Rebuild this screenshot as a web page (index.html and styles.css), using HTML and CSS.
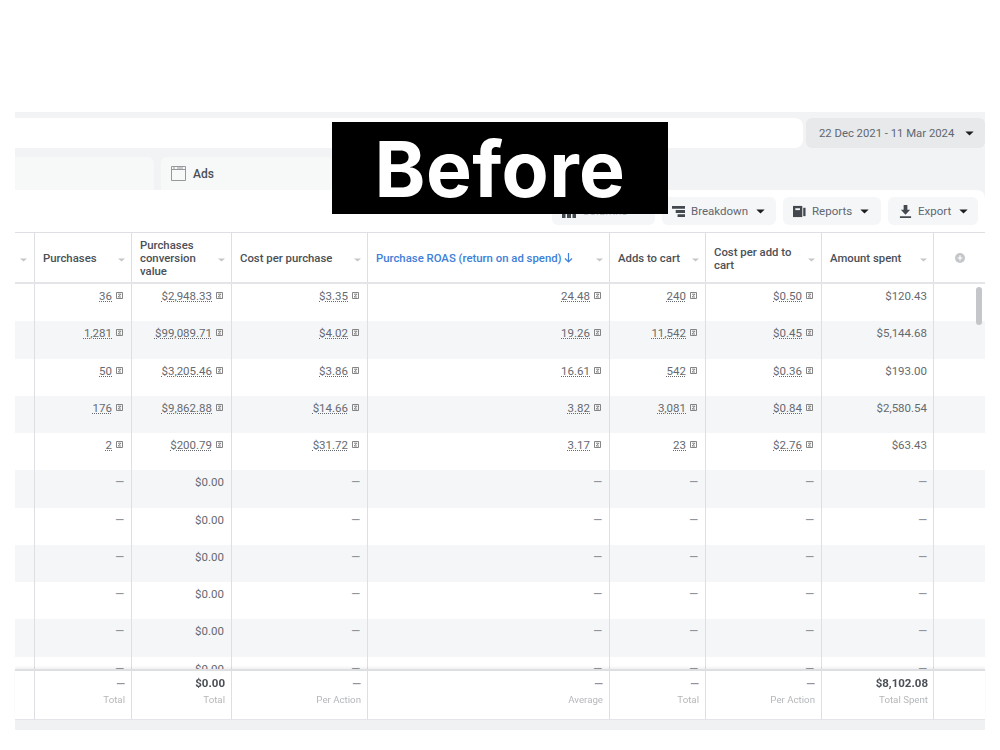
FILE: index.html
```html
<!DOCTYPE html>
<html lang="en">
<head>
<meta charset="utf-8">
<title>Ads report</title>
<link rel="stylesheet" href="styles.css">
</head>
<body>
<svg class="defs" width="0" height="0" aria-hidden="true">
  <symbol id="cmp" viewBox="0 0 7 7"><path d="M.5.5h6v6h-6z" fill="none" stroke="#777" stroke-width=".9"/><path d="M2 2.2h3L2.2 5H5" fill="none" stroke="#777" stroke-width=".9"/></symbol>
  <symbol id="sort" viewBox="0 0 9 5"><path d="M0 .5h9L4.500 4.500z" fill="#c4c6c9"/></symbol>
  <symbol id="caret" viewBox="0 0 10 6"><path d="M0 .5h10L5 5.500z" fill="#1c1e21"/></symbol>
</svg>
<main class="app">
  <div class="topstrip"></div>
  <div class="searchrow">
    <div class="search"></div>
    <div class="date"><span>22 Dec 2021 - 11 Mar 2024</span><svg class="caret"><use href="#caret"/></svg></div>
  </div>
  <div class="tabs">
    <div class="tab tab-first"></div>
    <div class="tab tab-ads">
      <svg class="ads-icon" viewBox="0 0 15 15"><path d="M.5.5h14v14H.5zM.5 3.500h14M2 2h2M6 2h6" fill="none" stroke="#8a8d91" stroke-width=".9"/></svg>
      <span>Ads</span>
    </div>
  </div>
  <div class="toolbar">
    <div class="btn btn-columns"><svg class="col-icon" viewBox="0 0 14 14"><path d="M0 0h3.500v14H0zM5 0h4v14H5zM10.500 0H14v14h-3.500z" fill="#444950"/></svg><span>Columns</span></div>
    <div class="btn btn-breakdown"><svg class="tool-icon" viewBox="0 0 14 14"><path d="M0 1h14v3H0zM4 5.500h10v3H4zM6 10h8v3H6z" fill="#444950"/></svg><span>Breakdown</span><svg class="caret"><use href="#caret"/></svg></div>
    <div class="btn btn-reports"><svg class="tool-icon" viewBox="0 0 14 14"><path d="M0 1h10v12H0z" fill="#444950"/><path d="M2.500 3.500h5v2h-5z" fill="#f5f6f7"/><path d="M11 3h2.500v9H11z" fill="#444950"/></svg><span>Reports</span><svg class="caret"><use href="#caret"/></svg></div>
    <div class="btn btn-export"><svg class="tool-icon" viewBox="0 0 14 14"><path d="M5 0h4v5h3L7 10.500 2 5h3zM1 12h12v2H1z" fill="#444950"/></svg><span>Export</span><svg class="caret"><use href="#caret"/></svg></div>
  </div>

  <div class="table">
    <div class="head grid">
      <div class="hc"><svg class="sort"><use href="#sort"/></svg></div>
      <div class="hc"><span>Purchases</span><svg class="sort"><use href="#sort"/></svg></div>
      <div class="hc"><span>Purchases conversion value</span><svg class="sort"><use href="#sort"/></svg></div>
      <div class="hc"><span>Cost per purchase</span><svg class="sort"><use href="#sort"/></svg></div>
      <div class="hc hc-active"><span>Purchase ROAS (return on ad spend)<svg class="arrow" viewBox="0 0 9 10"><path d="M4.500 0v9M1 5.500l3.500 3.500L8 5.500" fill="none" stroke="#4080d8" stroke-width="1.200"/></svg></span><svg class="sort"><use href="#sort"/></svg></div>
      <div class="hc"><span>Adds to cart</span><svg class="sort"><use href="#sort"/></svg></div>
      <div class="hc"><span>Cost per add to cart</span><svg class="sort"><use href="#sort"/></svg></div>
      <div class="hc"><span>Amount spent</span><svg class="sort"><use href="#sort"/></svg></div>
      <div class="hc hc-add"><svg class="plus" viewBox="0 0 10 10"><circle cx="5" cy="5" r="5" fill="#c4c6c9"/><path d="M5 2.500v5M2.500 5h5" stroke="#fff" stroke-width="1.200"/></svg></div>
    </div>

    <div class="rows">
      <div class="row grid">
        <div class="c"></div>
        <div class="c"><u>36</u><svg class="cmp"><use href="#cmp"/></svg></div>
        <div class="c"><u>$2,948.33</u><svg class="cmp"><use href="#cmp"/></svg></div>
        <div class="c"><u>$3.35</u><svg class="cmp"><use href="#cmp"/></svg></div>
        <div class="c"><u>24.48</u><svg class="cmp"><use href="#cmp"/></svg></div>
        <div class="c"><u>240</u><svg class="cmp"><use href="#cmp"/></svg></div>
        <div class="c"><u>$0.50</u><svg class="cmp"><use href="#cmp"/></svg></div>
        <div class="c">$120.43</div>
        <div class="c"></div>
      </div>
      <div class="row grid">
        <div class="c"></div>
        <div class="c"><u>1,281</u><svg class="cmp"><use href="#cmp"/></svg></div>
        <div class="c"><u>$99,089.71</u><svg class="cmp"><use href="#cmp"/></svg></div>
        <div class="c"><u>$4.02</u><svg class="cmp"><use href="#cmp"/></svg></div>
        <div class="c"><u>19.26</u><svg class="cmp"><use href="#cmp"/></svg></div>
        <div class="c"><u>11,542</u><svg class="cmp"><use href="#cmp"/></svg></div>
        <div class="c"><u>$0.45</u><svg class="cmp"><use href="#cmp"/></svg></div>
        <div class="c">$5,144.68</div>
        <div class="c"></div>
      </div>
      <div class="row grid">
        <div class="c"></div>
        <div class="c"><u>50</u><svg class="cmp"><use href="#cmp"/></svg></div>
        <div class="c"><u>$3,205.46</u><svg class="cmp"><use href="#cmp"/></svg></div>
        <div class="c"><u>$3.86</u><svg class="cmp"><use href="#cmp"/></svg></div>
        <div class="c"><u>16.61</u><svg class="cmp"><use href="#cmp"/></svg></div>
        <div class="c"><u>542</u><svg class="cmp"><use href="#cmp"/></svg></div>
        <div class="c"><u>$0.36</u><svg class="cmp"><use href="#cmp"/></svg></div>
        <div class="c">$193.00</div>
        <div class="c"></div>
      </div>
      <div class="row grid">
        <div class="c"></div>
        <div class="c"><u>176</u><svg class="cmp"><use href="#cmp"/></svg></div>
        <div class="c"><u>$9,862.88</u><svg class="cmp"><use href="#cmp"/></svg></div>
        <div class="c"><u>$14.66</u><svg class="cmp"><use href="#cmp"/></svg></div>
        <div class="c"><u>3.82</u><svg class="cmp"><use href="#cmp"/></svg></div>
        <div class="c"><u>3,081</u><svg class="cmp"><use href="#cmp"/></svg></div>
        <div class="c"><u>$0.84</u><svg class="cmp"><use href="#cmp"/></svg></div>
        <div class="c">$2,580.54</div>
        <div class="c"></div>
      </div>
      <div class="row grid">
        <div class="c"></div>
        <div class="c"><u>2</u><svg class="cmp"><use href="#cmp"/></svg></div>
        <div class="c"><u>$200.79</u><svg class="cmp"><use href="#cmp"/></svg></div>
        <div class="c"><u>$31.72</u><svg class="cmp"><use href="#cmp"/></svg></div>
        <div class="c"><u>3.17</u><svg class="cmp"><use href="#cmp"/></svg></div>
        <div class="c"><u>23</u><svg class="cmp"><use href="#cmp"/></svg></div>
        <div class="c"><u>$2.76</u><svg class="cmp"><use href="#cmp"/></svg></div>
        <div class="c">$63.43</div>
        <div class="c"></div>
      </div>
      <div class="row grid"><div class="c"></div><div class="c d">—</div><div class="c">$0.00</div><div class="c d">—</div><div class="c d">—</div><div class="c d">—</div><div class="c d">—</div><div class="c d">—</div><div class="c"></div></div>
      <div class="row grid"><div class="c"></div><div class="c d">—</div><div class="c">$0.00</div><div class="c d">—</div><div class="c d">—</div><div class="c d">—</div><div class="c d">—</div><div class="c d">—</div><div class="c"></div></div>
      <div class="row grid"><div class="c"></div><div class="c d">—</div><div class="c">$0.00</div><div class="c d">—</div><div class="c d">—</div><div class="c d">—</div><div class="c d">—</div><div class="c d">—</div><div class="c"></div></div>
      <div class="row grid"><div class="c"></div><div class="c d">—</div><div class="c">$0.00</div><div class="c d">—</div><div class="c d">—</div><div class="c d">—</div><div class="c d">—</div><div class="c d">—</div><div class="c"></div></div>
      <div class="row grid"><div class="c"></div><div class="c d">—</div><div class="c">$0.00</div><div class="c d">—</div><div class="c d">—</div><div class="c d">—</div><div class="c d">—</div><div class="c d">—</div><div class="c"></div></div>
      <div class="row grid"><div class="c"></div><div class="c d">—</div><div class="c">$0.00</div><div class="c d">—</div><div class="c d">—</div><div class="c d">—</div><div class="c d">—</div><div class="c d">—</div><div class="c"></div></div>
      <div class="scrollbar"></div>
    </div>

    <div class="foot grid">
      <div class="f"></div>
      <div class="f"><b class="d">—</b><small>Total</small></div>
      <div class="f"><b>$0.00</b><small>Total</small></div>
      <div class="f"><b class="d">—</b><small>Per Action</small></div>
      <div class="f"><b class="d">—</b><small>Average</small></div>
      <div class="f"><b class="d">—</b><small>Total</small></div>
      <div class="f"><b class="d">—</b><small>Per Action</small></div>
      <div class="f"><b>$8,102.08</b><small>Total Spent</small></div>
      <div class="f"></div>
    </div>
  </div>
  <div class="bottomstrip"></div>
</main>
<div class="label">Before</div>
</body>
</html>
```
FILE: styles.css
```css
* { box-sizing: border-box; }
html, body { margin: 0; padding: 0; background: #fff; }
body { width: 1000px; height: 750px; overflow: hidden; position: relative; font-family: Roboto, "Liberation Sans", sans-serif; color: #606770; }
.defs { position: absolute; }

.app { width: 970px; margin: 112px 0 0 15px; display: flex; flex-direction: column; filter: blur(.4px); background: #f2f3f4; }
.topstrip { height: 6px; background: #f2f3f4; }

.searchrow { display: flex; height: 30px; gap: 3px; }
.search { flex: 1; background: #fff; border-radius: 0 8px 8px 0; }
.date { width: 179px; background: #e8e9eb; border-radius: 6px; display: flex; align-items: center; padding-left: 13px; font-size: 11.300px; color: #606770; }
.date .caret { margin-left: 11px; }

.tabs { height: 42px; display: flex; align-items: flex-end; gap: 7px; }
.tab { height: 33px; background: #f7f8f8; border-radius: 6px 6px 0 0; }
.tab-first { width: 139px; border-top-left-radius: 0; }
.tab-ads { width: 172px; display: flex; align-items: center; padding-left: 10px; gap: 7px; font-size: 12px; font-weight: 500; color: #4b4f56; }
.ads-icon { width: 15px; height: 15px; }

.toolbar { height: 42px; background: #fff; display: flex; align-items: center; justify-content: flex-end; gap: 7px; padding: 0 7px 0 0; border-radius: 0 8px 0 0; }
.btn { height: 28px; background: #f5f6f7; border-radius: 6px; display: flex; align-items: center; font-size: 11.500px; color: #606770; }
.btn-columns { width: 103px; padding-left: 10px; gap: 6px; color: #bcc0c4; }
.btn-breakdown { width: 114px; padding-left: 10px; }
.btn-reports { width: 98px; padding-left: 10px; }
.btn-export { width: 90px; padding-left: 11px; }
.col-icon { width: 14px; height: 14px; }
.tool-icon { width: 13px; height: 13px; margin-right: 6px; flex: none; }
.caret { width: 9px; height: 5px; margin-left: 8px; flex: none; }

.table { background: #fff; border-top: 1px solid #dddfe2; }
.grid { display: grid; grid-template-columns: 20px 97px 100px 136px 242px 96px 116px 112px 51px; }

.head { height: 51px; border-bottom: 2px solid #e4e5e8; }
.hc { display: flex; align-items: center; justify-content: space-between; gap: 6px; padding: 2px 6px 0 8px; border-right: 1px solid #dddfe2; font-size: 11.350px; line-height: 13px; font-weight: 500; color: #4b4f56; }
.hc:first-child { padding: 2px 7px 0 0; justify-content: flex-end; }
.hc:last-child { border-right: 0; justify-content: center; padding: 0; }
.hc-active { color: #4080d8; }
.sort { width: 7px; height: 4px; flex: none; margin-top: 2px; }
.arrow { width: 9px; height: 10px; margin-left: 2px; vertical-align: -1px; }
.plus { width: 10px; height: 10px; }

.rows { position: relative; height: 385px; overflow: hidden; }
.row { height: 37.250px; }
.row:nth-child(even) { background: #f5f6f7; }
.c { display: flex; justify-content: flex-end; align-items: flex-start; padding: 5px 7px 0 0; border-right: 1px solid #dddfe2; font-size: 11.500px; line-height: 15px; color: #666a70; }
.c:nth-child(8) { padding-right: 6px; }
.c:last-child { border-right: 0; }
.c u { text-decoration: underline dotted #666a70 1px; text-underline-offset: 1px; }
.cmp { width: 7px; height: 7px; margin: 3px 1px 0 4px; flex: none; }
.c.d { color: #90949c; font-weight: 500; }
.scrollbar { position: absolute; top: 3px; right: 3px; width: 6px; height: 38px; border-radius: 3px; background: #c4c6c9; }

.foot { height: 51px; border-top: 2px solid #dddfe2; border-bottom: 1px solid #e4e5e8; box-shadow: 0 -2px 2px rgba(0,0,0,.05); position: relative; }
.f { display: flex; flex-direction: column; align-items: flex-end; padding: 5px 6px 0 0; border-right: 1px solid #dddfe2; }
.f:nth-child(8) { padding-right: 5px; }
.f:last-child { border-right: 0; }
.f b { font-size: 11.500px; line-height: 15px; font-weight: 700; color: #4b4f56; }
.f b.d { color: #90949c; }
.f small { font-size: 9.700px; line-height: 18px; color: #b4b7bb; }

.bottomstrip { height: 10px; background: #f0f1f2; }

.label { position: absolute; left: 332px; top: 122px; width: 336px; height: 92px; padding-top: 3px; background: #000; color: #fff; display: flex; align-items: center; justify-content: center; font-family: Inter, sans-serif; font-weight: 700; font-size: 77px; letter-spacing: .4px; line-height: 1; }
```
